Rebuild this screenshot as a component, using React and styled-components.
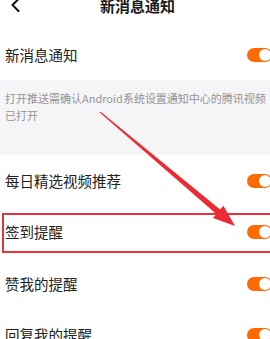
import React from "react";
import styled, { createGlobalStyle } from "styled-components";

const Global = createGlobalStyle`
  html, body { margin: 0; padding: 0; background: #ffffff; }
  body { font-family: "Noto Sans CJK SC", "Noto Sans", sans-serif; overflow: hidden; }
`;

const Page = styled.div`
  position: relative;
  width: 270px;
  height: 339px;
  overflow: hidden;
  background: #ffffff;
`;

const Header = styled.div`
  height: 29px;
  display: grid;
  grid-template-columns: 40px 1fr 35px;
  align-items: start;
`;

const BackCell = styled.div`
  height: 14px;
  padding-left: 11px;
  margin-top: -2px;
`;

const Title = styled.div`
  text-align: center;
  font-size: 15px;
  line-height: 11px;
  font-weight: 700;
  color: #1a1a1a;
`;

const Row = styled.div`
  position: relative;
  height: ${(p) => p.$h || 51.5}px;
  display: flex;
  align-items: center;
  justify-content: space-between;
  padding-left: 5px;
  box-sizing: border-box;
`;

const Label = styled.span`
  font-size: 14.5px;
  color: #222222;
  line-height: 20px;
`;

const Track = styled.span`
  position: relative;
  width: 25px;
  height: 14px;
  border-radius: 7px;
  background: #ff6a00;
  margin-right: -2px;
  flex: none;
`;

const Knob = styled.span`
  position: absolute;
  top: 1px;
  right: 1px;
  width: 12px;
  height: 12px;
  border-radius: 50%;
  background: #ffffff;
`;

const Notice = styled.div`
  height: 75px;
  box-sizing: border-box;
  background: #f5f5f7;
  padding: 10px 0 0 5px;
  font-size: 11px;
  line-height: 17px;
  color: #949494;
`;

const Highlight = styled.div`
  position: absolute;
  left: 2px;
  right: -10px;
  top: 6.5px;
  bottom: 5px;
  border: 2px solid #e8333b;
  pointer-events: none;
`;

const ArrowLayer = styled.svg`
  position: absolute;
  left: 0;
  top: 0;
  width: 270px;
  height: 339px;
  pointer-events: none;
`;

function Toggle() {
  return (
    <Track>
      <Knob />
    </Track>
  );
}

function SettingRow({ label, h, children }) {
  return (
    <Row $h={h}>
      <Label>{label}</Label>
      <Toggle />
      {children}
    </Row>
  );
}

export default function App() {
  return (
    <>
      <Global />
      <Page>
        <Header>
          <BackCell>
            <svg width="9" height="14" viewBox="0 0 9 14" style={{ display: "block" }}>
              <polyline
                points="7.5,1 1.5,7 7.5,13"
                fill="none"
                stroke="#111111"
                strokeWidth="2"
                strokeLinecap="round"
                strokeLinejoin="round"
              />
            </svg>
          </BackCell>
          <Title>新消息通知</Title>
          <span />
        </Header>
        <SettingRow label="新消息通知" h={51} />
        <Notice>
          打开推送需确认Android系统设置通知中心的腾讯视频
          <br />
          已打开
        </Notice>
        <SettingRow label="每日精选视频推荐" />
        <SettingRow label="签到提醒">
          <Highlight />
        </SettingRow>
        <SettingRow label="赞我的提醒" />
        <SettingRow label="回复我的提醒" />
        <ArrowLayer viewBox="0 0 270 339">
          <polygon
            points="99.7,112.4 100.3,111.6 220.1,209.5 223.4,205.7 235,226 213,217.9 216.3,214.1"
            fill="#ec2a33"
          />
        </ArrowLayer>
      </Page>
    </>
  );
}
